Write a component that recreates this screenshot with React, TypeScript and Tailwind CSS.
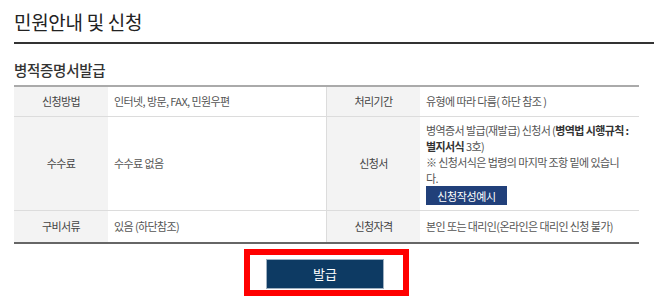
export default function App() {
  return (
    <div className="w-[654px] h-[296px] overflow-hidden bg-white font-['Noto_Sans_CJK_KR','Noto_Sans',sans-serif]">
      <div className="ml-[14px] pt-[8px] pb-[6px] border-b-2 border-[#333]">
        <h1 className="text-[19px] leading-[28px] text-[#222] tracking-[-0.3px]">민원안내 및 신청</h1>
      </div>
      <h2 className="ml-[14px] mt-[16px] text-[14.5px] leading-[20px] font-medium text-[#333] tracking-[-0.3px]">병적증명서발급</h2>
      <div className="ml-[14px] mt-[5px] w-[625px] border-t-2 border-t-[#aaa] border-b-2 border-b-[#666] text-[11px] tracking-[-0.6px]">
        <div className="flex h-[30px] border-b border-[#dcdcdc]">
          <div className="w-[94px] bg-[#f3f3f3] flex items-center justify-center text-[#444]">신청방법</div>
          <div className="w-[219px] border-r border-[#dcdcdc] flex items-center pl-[6px] text-[#555]">인터넷, 방문, FAX, 민원우편</div>
          <div className="w-[93px] bg-[#f3f3f3] flex items-center justify-center text-[#444]">처리기간</div>
          <div className="w-[219px] flex items-center pl-[6px] text-[#555]">유형에 따라 다름( 하단 참조 )</div>
        </div>
        <div className="flex h-[94px] border-b border-[#dcdcdc]">
          <div className="w-[94px] bg-[#f3f3f3] flex items-center justify-center text-[#444]">수수료</div>
          <div className="w-[219px] border-r border-[#dcdcdc] flex items-center pl-[6px] text-[#555]">수수료 없음</div>
          <div className="w-[93px] bg-[#f3f3f3] flex items-center justify-center text-[#444]">신청서</div>
          <div className="w-[219px] flex flex-col justify-center pl-[6px] text-[#555] leading-[16px]">
            <div className="whitespace-nowrap">
              병역증서 발급(재발급) 신청서 (<span className="font-bold text-[#333]">병역법 시행규칙 :</span>
            </div>
            <div className="whitespace-nowrap">
              <span className="font-bold text-[#333]">별지서식</span> 3호)
            </div>
            <div className="whitespace-nowrap">※ 신청서식은 법령의 마지막 조항 밑에 있습니</div>
            <div>다.</div>
            <div>
              <span className="inline-flex items-center justify-center h-[19px] w-[81px] bg-[#21407a] text-white text-[11px] tracking-[-0.4px]">신청작성예시</span>
            </div>
          </div>
        </div>
        <div className="flex h-[31px]">
          <div className="w-[94px] bg-[#f3f3f3] flex items-center justify-center text-[#444]">구비서류</div>
          <div className="w-[219px] border-r border-[#dcdcdc] flex items-center pl-[6px] text-[#555]">있음 (하단참조)</div>
          <div className="w-[93px] bg-[#f3f3f3] flex items-center justify-center text-[#444]">신청자격</div>
          <div className="w-[219px] flex items-center pl-[6px] text-[#555] whitespace-nowrap">본인 또는 대리인(온라인은 대리인 신청 불가)</div>
        </div>
      </div>
      <div className="ml-[14px] w-[625px] mt-[5px] flex justify-center">
        <div className="w-[165px] border-[6px] border-[#ff0000] pt-[4px] pb-[1px] pl-[16px] pr-[19px]">
          <button className="w-[118px] h-[30px] bg-[#0d3a63] border border-[#9fb0c0] text-white text-[13px] flex items-center justify-center">발급</button>
        </div>
      </div>
    </div>
  );
}
